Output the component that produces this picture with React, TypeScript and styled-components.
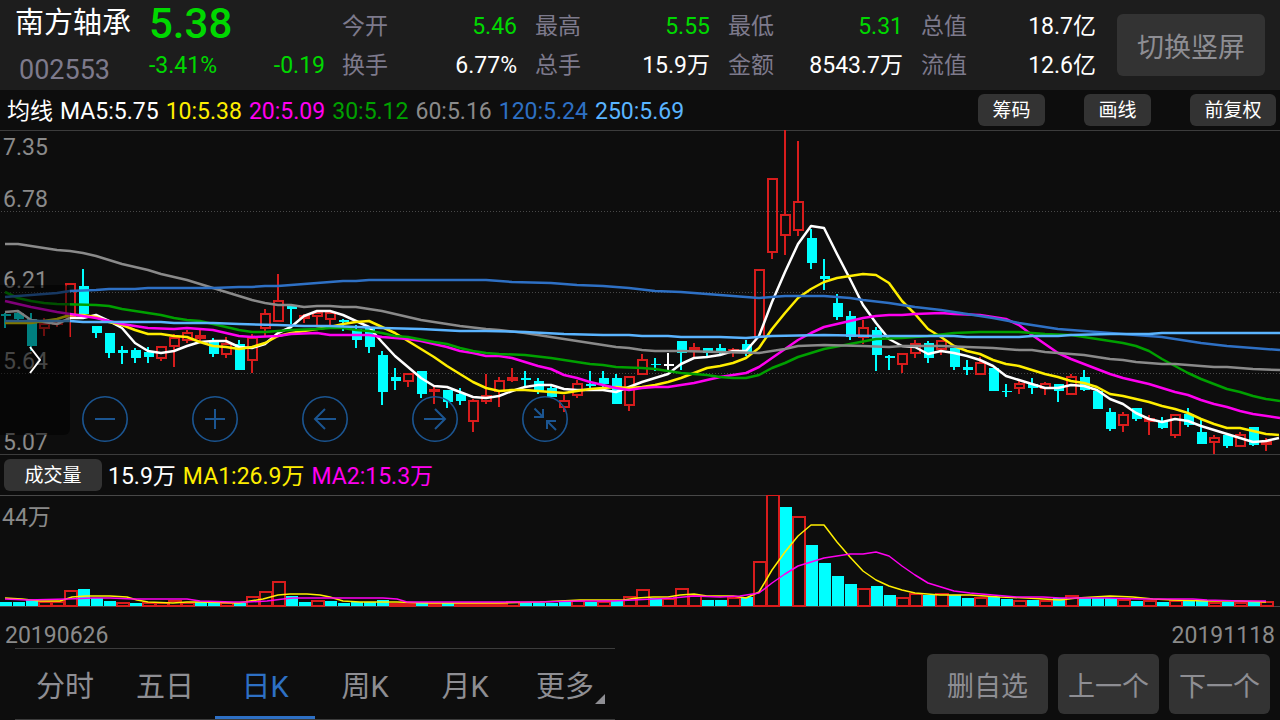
import React from "react";
import styled, { createGlobalStyle } from "styled-components";

const colors = {
  page: "#0d0d0d",
  header: "#1d1d1d",
  button: "#333333",
  buttonText: "#8e8e93",
  label: "#7d7a8c",
  axis: "#8a8a8a",
  rule: "#3c3c3c",
  up: "#d71c1c",
  down: "#00ffff",
  fall: "#00d800",
  yellow: "#ffee00",
  magenta: "#ff00f0",
  green: "#00a000",
  grey: "#8a8a8a",
  blue: "#2e70c4",
  sky: "#5ab4ff",
  control: "#1b5591",
};

const GlobalStyle = createGlobalStyle`
  * { box-sizing: border-box; }
  body {
    margin: 0;
    background: ${colors.page};
    color: #ffffff;
    font-family: Roboto, "Noto Sans CJK SC", sans-serif;
  }
  button {
    margin: 0;
    padding: 0;
    border: 0;
    background: none;
    color: inherit;
    font: inherit;
    cursor: pointer;
    white-space: nowrap;
  }
`;

const Page = styled.div`
  display: flex;
  flex-direction: column;
  min-height: 100vh;
`;

const Header = styled.header`
  display: flex;
  align-items: flex-start;
  min-height: 90px;
  padding: 0 15px;
  background: ${colors.header};
`;

const Identity = styled.div`
  flex: none;
  width: 134px;
`;

const StockName = styled.h1`
  margin: 0;
  font-size: 29px;
  line-height: 46px;
  font-weight: 400;
  white-space: nowrap;
`;

const StockCode = styled.div`
  padding: 4px 0 0 4px;
  font-size: 27px;
  line-height: 40px;
  color: ${colors.label};
`;

const Quote = styled.div`
  flex: none;
  width: 176px;
  margin-right: 17px;
  color: ${colors.fall};
`;

const LastPrice = styled.div`
  font-size: 42px;
  line-height: 48px;
  font-weight: 500;
`;

const Change = styled.div`
  display: flex;
  justify-content: space-between;
  font-size: 23px;
  line-height: 36px;
`;

const Stats = styled.dl`
  flex: 1;
  display: grid;
  grid-template-columns: repeat(4, 1fr);
  gap: 1px 18px;
  margin: 0;
  padding-top: 8px;
`;

const Stat = styled.div`
  display: flex;
  justify-content: space-between;
  font-size: 23px;
  line-height: 38px;
  white-space: nowrap;
`;

const StatLabel = styled.dt`
  color: ${colors.label};
`;

const StatValue = styled.dd<{ $fall?: boolean }>`
  margin: 0;
  color: ${(p) => (p.$fall ? colors.fall : "#ffffff")};
`;

const BigButton = styled.button<{ $width: number; $height: number }>`
  flex: none;
  width: ${(p) => p.$width}px;
  height: ${(p) => p.$height}px;
  border-radius: 6px;
  background: ${colors.button};
  color: ${colors.buttonText};
  font-size: 27px;
`;

const SwitchSlot = styled.div`
  padding: 14px 0 0 21px;
`;

const LegendRow = styled.div`
  display: flex;
  align-items: center;
  justify-content: space-between;
  min-height: 40px;
  padding: 0 4px 0 7px;
`;

const Legend = styled.div`
  display: flex;
  gap: 7px;
  padding-top: 4px;
  font-size: 23px;
  line-height: 36px;
  white-space: nowrap;
`;

const LegendItem = styled.span<{ $color: string }>`
  color: ${(p) => p.$color};
`;

const ChipGroup = styled.div`
  display: flex;
  gap: 39px;
`;

const Chip = styled.button<{ $width: number }>`
  width: ${(p) => p.$width}px;
  height: 32px;
  padding-top: 1px;
  border-radius: 6px;
  background: ${colors.button};
  font-size: 19px;
  line-height: 31px;
`;

const PriceArea = styled.section`
  position: relative;
  height: 325px;
`;

const VolumeArea = styled.section`
  position: relative;
  height: 113px;
`;

const Plot = styled.svg`
  display: block;
  width: 100%;
  height: 100%;
`;

const PriceScale = styled.div`
  position: absolute;
  inset: 4px auto 0 3px;
  color: ${colors.axis};
  font-size: 23px;
  line-height: 28px;
`;

const ScaleMark = styled.div<{ $gap: number }>`
  margin-top: ${(p) => p.$gap}px;
`;

const VolumeScale = styled.div`
  position: absolute;
  top: 9px;
  left: 2px;
  color: ${colors.axis};
  font-size: 23px;
  line-height: 28px;
`;

const DrawerHandle = styled.button`
  position: absolute;
  left: 0;
  top: 155px;
  display: flex;
  justify-content: center;
  align-items: center;
  width: 70px;
  height: 150px;
  border-radius: 0 6px 6px 0;
  background: rgba(0, 0, 0, 0.5);
`;

const ChartControls = styled.div`
  position: absolute;
  left: 82px;
  top: 266px;
  display: flex;
  gap: 64px;
`;

const RoundButton = styled.button`
  width: 46px;
  height: 46px;
  svg { display: block; }
`;

const VolumeRow = styled.div`
  display: flex;
  align-items: center;
  gap: 6px;
  min-height: 40px;
  padding: 0 4px;
`;

const Dates = styled.div`
  display: flex;
  justify-content: space-between;
  padding: 16px 5px 0;
  color: ${colors.axis};
  font-size: 23px;
  line-height: 24px;
`;

const Footer = styled.footer`
  flex: 1;
  display: flex;
  justify-content: space-between;
  align-items: flex-start;
  padding: 0 10px 0 15px;
`;

const Tabs = styled.nav`
  display: flex;
  height: 72px;
  border-top: 1px solid ${colors.rule};
  border-bottom: 1px solid ${colors.rule};
`;

const Tab = styled.button<{ $active?: boolean }>`
  position: relative;
  width: 100px;
  height: 70px;
  padding-top: 2px;
  border-bottom: 3px solid ${(p) => (p.$active ? colors.blue : "transparent")};
  color: ${(p) => (p.$active ? colors.blue : colors.buttonText)};
  font-size: 29px;
`;

const Corner = styled.svg`
  position: absolute;
  right: 10px;
  bottom: 12px;
`;

const Actions = styled.div`
  display: flex;
  gap: 10px;
  padding-top: 6px;
`;

type Kind = "r" | "c" | "w";

// One entry per session: kind, high, body top, body bottom, low.
const candles: [Kind, number, number, number, number][] = [
  ["c", 313, 314, 316, 328], ["c", 312, 313, 319, 321], ["c", 313, 319, 346, 351], ["r", 318, 323, 329, 336],
  ["r", 320, 321, 325, 327], ["r", 283, 283, 318, 337], ["c", 269, 286, 314, 318], ["c", 326, 326, 333, 338],
  ["c", 333, 333, 353, 358], ["c", 346, 350, 353, 364], ["c", 348, 350, 358, 363], ["c", 347, 352, 357, 363],
  ["r", 346, 346, 359, 361], ["r", 334, 337, 347, 367], ["r", 330, 332, 341, 343], ["r", 329, 335, 339, 341],
  ["c", 338, 341, 354, 357], ["r", 337, 343, 355, 358], ["c", 340, 344, 370, 370], ["r", 334, 337, 361, 373],
  ["r", 309, 313, 329, 336], ["r", 274, 300, 322, 322], ["c", 304, 305, 309, 324], ["r", 314, 315, 319, 323],
  ["r", 310, 312, 317, 325], ["r", 312, 312, 320, 327], ["c", 319, 320, 322, 331], ["c", 325, 329, 340, 348],
  ["c", 327, 327, 347, 353], ["c", 351, 355, 392, 405], ["c", 368, 377, 381, 390], ["r", 373, 373, 382, 387],
  ["c", 371, 371, 394, 398], ["r", 386, 389, 391, 404], ["c", 390, 390, 402, 408], ["c", 388, 394, 401, 405],
  ["r", 399, 400, 422, 432], ["r", 374, 395, 402, 404], ["r", 377, 380, 392, 407], ["r", 368, 377, 381, 382],
  ["c", 371, 378, 380, 386], ["c", 378, 381, 391, 394], ["c", 385, 388, 397, 397], ["r", 395, 400, 408, 412],
  ["r", 380, 383, 396, 398], ["c", 371, 384, 386, 388], ["c", 371, 378, 384, 387], ["c", 374, 378, 404, 404],
  ["r", 376, 376, 406, 411], ["r", 354, 359, 375, 375], ["c", 358, 364, 365, 371], ["w", 353, 364, 366, 370],
  ["c", 341, 341, 353, 370], ["r", 343, 347, 351, 359], ["c", 348, 348, 353, 356], ["c", 344, 348, 352, 356],
  ["r", 348, 349, 352, 357], ["c", 340, 344, 353, 356], ["r", 269, 269, 338, 338], ["r", 178, 178, 253, 259],
  ["r", 130, 214, 236, 255], ["r", 141, 201, 231, 236], ["c", 229, 238, 263, 269], ["c", 259, 276, 279, 290],
  ["c", 294, 303, 317, 320], ["c", 311, 316, 337, 340], ["r", 320, 327, 338, 344], ["c", 327, 330, 355, 371],
  ["c", 355, 356, 358, 370], ["r", 353, 353, 365, 373], ["r", 340, 343, 354, 358], ["c", 341, 343, 358, 363],
  ["r", 340, 340, 350, 355], ["c", 348, 348, 367, 370], ["c", 360, 367, 370, 375], ["r", 357, 362, 375, 375],
  ["c", 368, 368, 391, 391], ["c", 384, 391, 392, 397], ["r", 381, 383, 389, 394], ["c", 378, 384, 388, 394],
  ["r", 382, 383, 389, 395], ["c", 384, 384, 391, 402], ["r", 374, 376, 395, 395], ["c", 370, 377, 390, 391],
  ["c", 391, 391, 409, 409], ["c", 408, 412, 429, 431], ["r", 412, 414, 426, 432], ["c", 408, 408, 419, 421],
  ["r", 415, 418, 422, 435], ["c", 417, 421, 428, 429], ["r", 414, 414, 436, 438], ["c", 408, 414, 425, 427],
  ["c", 420, 432, 444, 444], ["r", 435, 437, 443, 454], ["c", 435, 435, 446, 448], ["r", 432, 434, 447, 447],
  ["c", 427, 427, 445, 446], ["r", 438, 441, 445, 451],
];

const volumeKinds =
  "cccrrrcccrcrrrrccrcrrrccrcccccrrcrcrrrrrccccrcrcrrcrrrccrcrrcrccccrccrrcrccrccrcrcrcccrcrcrccrcrcr";

const volumeTops = [
  602, 602, 600, 601, 601, 590, 589, 598, 601, 602, 603, 602, 602, 600, 602, 602, 603, 602, 603, 596,
  591, 581, 596, 602, 600, 601, 603, 602, 602, 600, 603, 603, 602, 603, 603, 603, 603, 603, 603, 601,
  603, 603, 603, 602, 600, 602, 601, 601, 596, 589, 598, 598, 588, 595, 600, 600, 597, 597, 561, 494,
  507, 516, 545, 563, 576, 584, 588, 586, 595, 597, 593, 595, 593, 595, 598, 597, 597, 599, 600, 600,
  600, 598, 595, 598, 598, 598, 599, 601, 600, 602, 600, 600, 600, 602, 602, 602, 601, 601,
];

const centre = (i: number) => 5 + 13 * i;

// Short averages carry one value per session.
const ma5 = [
  312, 311, 320, 322, 324, 318, 318, 315, 321, 328, 343, 351, 353, 351, 346, 342, 341, 341, 347, 348,
  344, 333, 327, 316, 311, 311, 315, 321, 327, 342, 356, 367, 378, 386, 387, 392, 397, 398, 396, 391,
  387, 385, 385, 389, 390, 390, 390, 392, 387, 382, 378, 374, 364, 358, 357, 355, 351, 351, 336, 302,
  272, 244, 226, 228, 254, 279, 305, 323, 339, 346, 347, 354, 351, 353, 356, 360, 366, 376, 380, 384,
  388, 388, 385, 386, 390, 399, 404, 413, 419, 422, 419, 421, 426, 430, 434, 438, 442, 441, 438,
];

const ma10 = [
  323, 323, 323, 321, 319, 315, 315, 317, 322, 325, 330, 334, 334, 336, 337, 342, 346, 347, 349, 347,
  343, 336, 333, 331, 329, 327, 324, 322, 321, 327, 333, 341, 349, 357, 366, 374, 382, 388, 391, 390,
  390, 391, 392, 393, 391, 389, 388, 387, 388, 387, 385, 382, 378, 373, 368, 366, 363, 358, 348, 329,
  313, 298, 289, 282, 278, 276, 274, 275, 283, 301, 314, 329, 337, 346, 351, 354, 360, 364, 366, 370,
  374, 377, 381, 383, 387, 394, 396, 399, 402, 406, 409, 413, 419, 424, 428, 428, 431, 434, 435,
];

const perSession = (values: number[]) => values.map((y, i) => `${centre(i)},${y}`).join(" ");

const ma20 =
  "5,301 31,307 57,312 70,314 96,318 122,324 135,326 148,328 174,329 187,328 200,329 213,330 239,336 252,337 278,336 291,334 317,333 330,335 369,335 382,337 408,339 421,341 434,344 447,347 460,351 473,353 486,356 499,356 512,358 525,362 538,366 551,369 564,375 577,378 590,382 603,385 616,388 629,390 642,388 655,387 668,387 681,385 694,383 707,380 720,377 733,375 746,373 759,367 772,358 785,349 798,340 811,333 824,327 837,324 850,321 863,318 876,316 889,315 902,315 915,314 941,313 954,314 980,315 993,317 1006,319 1019,325 1032,335 1045,344 1058,353 1071,359 1084,364 1097,369 1110,374 1123,378 1136,381 1149,384 1162,388 1175,392 1188,395 1201,400 1214,404 1227,407 1240,411 1253,414 1280,418";
const ma30 =
  "5,292 18,298 31,301 44,303 57,304 96,305 109,306 122,309 135,311 148,313 161,315 174,318 187,320 200,321 226,327 239,330 252,332 265,332 278,331 291,330 317,329 330,328 343,328 356,330 369,331 382,333 395,336 408,337 434,342 447,344 460,348 473,351 486,353 499,354 525,355 551,358 564,360 590,364 603,365 616,367 642,368 655,369 668,371 681,373 707,375 720,377 733,378 746,378 759,375 772,368 785,363 798,357 811,353 824,349 850,344 876,339 902,338 928,336 954,333 980,332 1019,332 1045,334 1071,335 1084,337 1110,341 1123,343 1136,346 1149,351 1162,359 1175,366 1188,373 1201,379 1214,384 1227,389 1240,392 1253,396 1266,399 1280,401";
const ma60 =
  "5,244 18,244 31,246 57,250 70,251 83,253 96,256 122,264 148,270 161,274 187,280 213,288 239,296 252,300 265,303 278,305 291,305 304,307 317,306 330,306 343,307 356,307 382,311 421,320 447,324 460,326 486,329 499,330 525,333 551,337 577,341 603,345 616,347 629,348 642,350 655,351 681,351 720,352 759,353 785,349 798,346 824,345 863,346 889,347 902,346 941,346 967,347 993,348 1019,350 1032,350 1045,352 1084,355 1110,359 1123,360 1136,362 1162,364 1175,364 1214,367 1227,367 1253,369 1280,370";
const ma120 =
  "5,297 31,295 57,293 70,291 96,290 109,289 135,289 148,288 213,288 239,287 252,287 265,286 278,286 304,284 317,283 343,281 356,281 369,280 486,280 512,282 551,283 577,285 603,286 629,288 655,291 681,292 720,295 759,298 785,296 824,296 850,298 863,300 889,303 915,307 941,310 967,314 993,318 1019,323 1058,329 1097,332 1136,335 1162,337 1201,343 1227,346 1280,350";
const ma250 =
  "5,321 70,321 83,322 161,322 174,323 213,323 239,324 278,325 304,326 330,326 356,327 382,328 421,329 460,331 486,331 525,332 564,334 603,335 629,335 642,336 668,336 681,337 720,337 746,338 772,336 824,335 876,336 954,336 967,337 1019,337 1032,336 1058,336 1071,335 1110,334 1149,334 1162,333 1280,333";
const volumeMa1 =
  "5,598 22,599 40,601 60,601 72,597 86,596 110,596 127,597 137,600 148,602 173,603 187,602 200,602 239,603 250,601 263,599 278,595 290,594 307,594 320,595 330,597 343,601 360,602 397,602 427,603 500,603 540,602 580,600 623,600 637,598 653,597 668,597 680,595 694,594 707,596 733,596 746,598 759,592 772,570 785,552 798,536 811,525 824,525 837,542 850,557 863,571 876,580 889,586 902,590 915,593 940,595 970,595 1000,597 1027,598 1060,600 1077,598 1110,596 1133,597 1153,599 1173,600 1207,601 1240,601 1266,602";
const volumeMa2 =
  "5,599 27,600 67,599 93,598 110,598 133,599 187,599 200,601 233,602 247,602 267,601 283,599 293,598 383,598 397,599 407,602 450,602 540,602 580,601 613,601 653,599 673,598 694,596 720,597 740,596 759,593 772,583 785,574 798,566 811,562 824,558 837,556 850,554 863,554 876,552 889,556 902,566 915,575 928,583 941,587 954,591 970,593 993,595 1017,597 1043,597 1060,598 1107,598 1140,599 1193,599 1207,600 1240,601 1266,601";

const Candle = ({ index }: { index: number }) => {
  const [kind, high, top, bottom, low] = candles[index];
  const x = centre(index);
  if (kind === "r") {
    return (
      <g fill={colors.up}>
        {top > high && <rect x={x - 1} y={high} width={2} height={top - high} />}
        {low > bottom && <rect x={x - 1} y={bottom} width={2} height={low - bottom} />}
        <rect
          x={x - 4}
          y={top + 1}
          width={9}
          height={Math.max(bottom - top - 2, 1)}
          fill="none"
          stroke={colors.up}
          strokeWidth={2}
        />
      </g>
    );
  }
  return (
    <g fill={kind === "c" ? colors.down : "#ffffff"}>
      <rect x={x - 1} y={high} width={2} height={low - high} />
      <rect x={x - 4} y={top} width={10} height={bottom - top} />
    </g>
  );
};

const VolumeBar = ({ index }: { index: number }) => {
  const x = 13 * index;
  const top = volumeTops[index];
  if (volumeKinds[index] === "r") {
    return (
      <rect x={x} y={top + 1} width={12} height={605 - top} fill="none" stroke={colors.up} strokeWidth={2} />
    );
  }
  return <rect x={x} y={top} width={12} height={606 - top} fill={colors.down} />;
};

const PriceChart = () => (
  <Plot viewBox="0 130 1280 325" preserveAspectRatio="none" role="img" aria-label="日K线">
    <path d="M0 130.5H1280M0 454.5H1280" stroke={colors.rule} />
    <path d="M1 211.5H1280M1 292.5H1280M1 373.5H1280" stroke="#484848" strokeDasharray="1 2" />
    {candles.map((_, i) => (
      <Candle key={i} index={i} />
    ))}
    <g fill="none" strokeWidth={2.5} strokeLinejoin="round">
      <polyline points={perSession(ma5)} stroke="#ffffff" />
      <polyline points={perSession(ma10)} stroke={colors.yellow} />
      <polyline points={ma20} stroke={colors.magenta} />
      <polyline points={ma30} stroke={colors.green} />
      <polyline points={ma60} stroke={colors.grey} />
      <polyline points={ma120} stroke={colors.blue} />
      <polyline points={ma250} stroke={colors.sky} />
    </g>
  </Plot>
);

const VolumeChart = () => (
  <Plot viewBox="0 495 1280 113" preserveAspectRatio="none" role="img" aria-label="成交量">
    <path d="M0 495.5H1280M0 606.5H1280" stroke="#484848" />
    {volumeTops.map((_, i) => (
      <VolumeBar key={i} index={i} />
    ))}
    <g fill="none" strokeWidth={1.5} strokeLinejoin="round">
      <polyline points={volumeMa1} stroke={colors.yellow} />
      <polyline points={volumeMa2} stroke={colors.magenta} />
    </g>
  </Plot>
);

const controls: { label: string; path: string }[] = [
  { label: "缩小", path: "M13 23H33" },
  { label: "放大", path: "M13 23H33M23 13V33" },
  { label: "左移", path: "M34 23H13M23 13L13 23L23 33" },
  { label: "右移", path: "M12 23H33M23 13L33 23L23 33" },
  { label: "收起", path: "M12.5 12.5L20.5 20.5M12 21H21V13M34 34L26 26M34 25H25V33" },
];

const stats: { label: string; value: string; fall?: boolean }[] = [
  { label: "今开", value: "5.46", fall: true },
  { label: "最高", value: "5.55", fall: true },
  { label: "最低", value: "5.31", fall: true },
  { label: "总值", value: "18.7亿" },
  { label: "换手", value: "6.77%" },
  { label: "总手", value: "15.9万" },
  { label: "金额", value: "8543.7万" },
  { label: "流值", value: "12.6亿" },
];

const averages: [string, string][] = [
  ["均线", "#ffffff"],
  ["MA5:5.75", "#ffffff"],
  ["10:5.38", colors.yellow],
  ["20:5.09", colors.magenta],
  ["30:5.12", colors.green],
  ["60:5.16", colors.grey],
  ["120:5.24", colors.blue],
  ["250:5.69", colors.sky],
];

const volumeLegend: [string, string][] = [
  ["15.9万", "#ffffff"],
  ["MA1:26.9万", colors.yellow],
  ["MA2:15.3万", colors.magenta],
];

const scale: [string, number][] = [
  ["7.35", 0],
  ["6.78", 24],
  ["6.21", 53],
  ["5.64", 53],
  ["5.07", 53],
];

const tabs = ["分时", "五日", "日K", "周K", "月K", "更多"];

export default function App() {
  return (
    <Page>
      <GlobalStyle />
      <Header>
        <Identity>
          <StockName>南方轴承</StockName>
          <StockCode>002553</StockCode>
        </Identity>
        <Quote>
          <LastPrice>5.38</LastPrice>
          <Change>
            <span>-3.41%</span>
            <span>-0.19</span>
          </Change>
        </Quote>
        <Stats>
          {stats.map((s) => (
            <Stat key={s.label}>
              <StatLabel>{s.label}</StatLabel>
              <StatValue $fall={s.fall}>{s.value}</StatValue>
            </Stat>
          ))}
        </Stats>
        <SwitchSlot>
          <BigButton type="button" $width={148} $height={62}>切换竖屏</BigButton>
        </SwitchSlot>
      </Header>

      <LegendRow>
        <Legend>
          {averages.map(([text, color]) => (
            <LegendItem key={text} $color={color}>{text}</LegendItem>
          ))}
        </Legend>
        <ChipGroup>
          <Chip type="button" $width={67}>筹码</Chip>
          <Chip type="button" $width={67}>画线</Chip>
          <Chip type="button" $width={86}>前复权</Chip>
        </ChipGroup>
      </LegendRow>

      <PriceArea>
        <PriceScale>
          {scale.map(([text, gap]) => (
            <ScaleMark key={text} $gap={gap}>{text}</ScaleMark>
          ))}
        </PriceScale>
        <PriceChart />
        <DrawerHandle type="button" aria-label="展开">
          <svg width="12" height="28" viewBox="0 0 12 28" fill="none" stroke="#ffffff" strokeWidth="2">
            <path d="M1 1L11 14L1 27" />
          </svg>
        </DrawerHandle>
        <ChartControls>
          {controls.map((c) => (
            <RoundButton key={c.label} type="button" aria-label={c.label}>
              <svg width="46" height="46" viewBox="0 0 46 46" fill="none" stroke={colors.control}>
                <circle cx="23" cy="23" r="22.2" strokeWidth="1.6" />
                <path d={c.path} strokeWidth="2" />
              </svg>
            </RoundButton>
          ))}
        </ChartControls>
      </PriceArea>

      <VolumeRow>
        <Chip type="button" $width={98}>成交量</Chip>
        <Legend>
          {volumeLegend.map(([text, color]) => (
            <LegendItem key={text} $color={color}>{text}</LegendItem>
          ))}
        </Legend>
      </VolumeRow>

      <VolumeArea>
        <VolumeScale>44万</VolumeScale>
        <VolumeChart />
      </VolumeArea>

      <Dates>
        <span>20190626</span>
        <span>20191118</span>
      </Dates>

      <Footer>
        <Tabs>
          {tabs.map((tab) => (
            <Tab key={tab} type="button" $active={tab === "日K"}>
              {tab}
              {tab === "更多" && (
                <Corner width="10" height="10" viewBox="0 0 10 10" fill={colors.buttonText}>
                  <path d="M10 0V10H0Z" />
                </Corner>
              )}
            </Tab>
          ))}
        </Tabs>
        <Actions>
          <BigButton type="button" $width={121} $height={60}>删自选</BigButton>
          <BigButton type="button" $width={101} $height={60}>上一个</BigButton>
          <BigButton type="button" $width={101} $height={60}>下一个</BigButton>
        </Actions>
      </Footer>
    </Page>
  );
}
